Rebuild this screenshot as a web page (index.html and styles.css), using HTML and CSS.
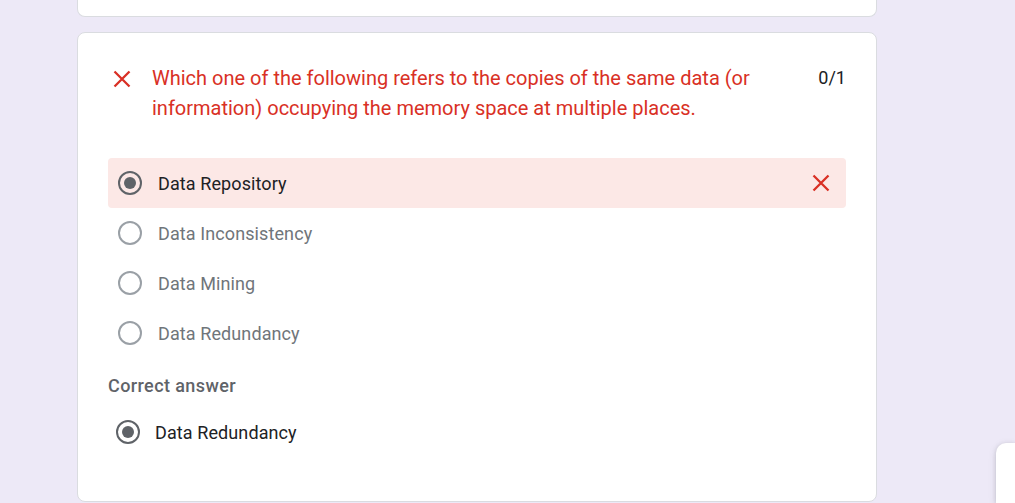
FILE: index.html
```html
<!DOCTYPE html>
<html>
<head>
<meta charset="utf-8">
<link rel="stylesheet" href="styles.css">
</head>
<body>
<div class="page">
  <div class="card card-top"></div>
  <div class="card card-q">
    <div class="q-head">
      <svg class="q-x" width="18" height="18" viewBox="0 0 18 18"><path d="M1.5 1.5L16.5 16.5M16.5 1.5L1.5 16.5" stroke="#d93025" stroke-width="2.3" fill="none"/></svg>
      <div class="q-title">Which one of the following refers to the copies of the same data (or information) occupying the memory space at multiple places.</div>
      <div class="q-score">0/1</div>
    </div>
    <div class="options">
      <div class="opt opt-wrong">
        <span class="radio radio-on"></span>
        <span class="opt-label dark">Data Repository</span>
        <svg class="opt-x" width="18" height="18" viewBox="0 0 18 18"><path d="M1.5 1.5L16.5 16.5M16.5 1.5L1.5 16.5" stroke="#d93025" stroke-width="2.3" fill="none"/></svg>
      </div>
      <div class="opt">
        <span class="radio"></span>
        <span class="opt-label">Data Inconsistency</span>
      </div>
      <div class="opt">
        <span class="radio"></span>
        <span class="opt-label">Data Mining</span>
      </div>
      <div class="opt">
        <span class="radio"></span>
        <span class="opt-label">Data Redundancy</span>
      </div>
    </div>
    <div class="correct-title">Correct answer</div>
    <div class="correct-opt">
      <span class="radio radio-on"></span>
      <span class="opt-label dark">Data Redundancy</span>
    </div>
  </div>
</div>
<div class="float-panel"></div>
</body>
</html>
```

FILE: styles.css
```css
html, body {
  margin: 0;
  padding: 0;
  height: 100%;
  overflow: hidden;
}
body {
  background: rgb(237, 233, 247);
  font-family: Roboto, "Noto Sans", Arial, sans-serif;
  position: relative;
}
.page {
  width: 800px;
  margin-left: 77px;
  display: flex;
  flex-direction: column;
  gap: 15px;
}
.card {
  background: #fff;
  border: 1px solid #dadce0;
  border-radius: 8px;
  box-sizing: border-box;
}
.card-top {
  height: 17px;
  border-top: none;
  border-radius: 0 0 8px 8px;
}
.card-q {
  height: 470px;
  padding: 30px 30px;
}
.q-head {
  display: flex;
  align-items: flex-start;
}
.q-x {
  flex: none;
  margin: 7px 21px 0 5px;
}
.q-title {
  flex: 1;
  color: #d93025;
  font-size: 20px;
  line-height: 30px;
  padding-right: 50px;
}
.q-score {
  flex: none;
  color: #202124;
  font-size: 18px;
  line-height: 30px;
}
.options {
  margin-top: 35px;
  display: flex;
  flex-direction: column;
}
.opt {
  height: 50px;
  display: flex;
  align-items: center;
  padding: 0 16px 0 10px;
  border-radius: 4px;
}
.opt-wrong {
  background: #fce8e6;
}
.radio {
  width: 24px;
  height: 24px;
  box-sizing: border-box;
  border: 2px solid #9aa0a6;
  border-radius: 50%;
  flex: none;
  position: relative;
}
.radio-on {
  border-color: #5f6368;
}
.radio-on::after {
  content: "";
  position: absolute;
  left: 4px;
  top: 4px;
  width: 12px;
  height: 12px;
  border-radius: 50%;
  background: #5f6368;
}
.opt-label {
  margin-left: 16px;
  font-size: 18px;
  letter-spacing: 0.1px;
  color: #70757a;
  flex: 1;
}
.opt-label.dark {
  color: #202124;
}
.opt-x {
  flex: none;
}
.correct-title {
  margin-top: 17px;
  font-size: 18px;
  color: #5f6368;
  font-weight: 500;
  letter-spacing: 0.4px;
  line-height: 22px;
}
.correct-opt {
  display: flex;
  align-items: center;
  height: 50px;
  margin-top: 10px;
  padding-left: 8px;
}
.correct-opt .opt-label {
  margin-left: 15px;
}
.float-panel {
  position: absolute;
  left: 996px;
  top: 443px;
  width: 19px;
  height: 60px;
  background: #fff;
  border-radius: 10px 0 0 0;
  box-shadow: 0 1px 4px rgba(60, 64, 67, 0.2), 0 2px 8px rgba(60, 64, 67, 0.1);
}
```
